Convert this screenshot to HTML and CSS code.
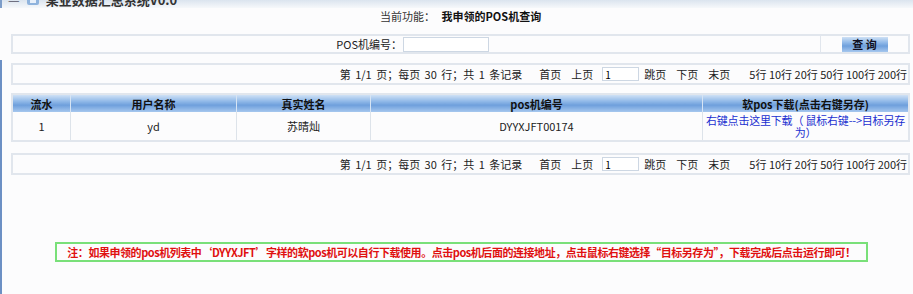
FILE: index.html
```html
<!DOCTYPE html>
<html lang="zh-CN">

<head>
    <meta charset="UTF-8">
    <title>我申领的POS机查询</title>
    <link rel="stylesheet" href="styles.css">
</head>

<body>
    <div class="topbar">
        <div class="topbar-text">
            <span class="topbar-dash">—</span>
            <svg class="topbar-icon" width="14" height="14" viewBox="0 0 14 14">
                <rect x="1" y="1" width="12" height="12" rx="2" fill="#8fb3dd" />
                <rect x="4" y="3" width="6" height="8" fill="#e8f0fa" />
            </svg>
            <span>某业数据汇总系统V0.0</span>
        </div>
    </div>

    <div class="func">当前功能： <b>我申领的POS机查询</b></div>

    <table class="search">
        <tr>
            <td class="search-label">POS机编号：</td>
            <td class="search-input"><input type="text"></td>
            <td class="search-btn"><button>查 询</button></td>
        </tr>
    </table>

    <div class="main">
        <div class="pager">
            <span class="pg-info">第 1/1 页；每页 30 行；共 1 条记录</span>
            <span class="pg-link first">首页</span>
            <span class="pg-link">上页</span>
            <input class="pg-input" type="text" value="1">
            <span class="pg-link jump">跳页</span>
            <span class="pg-link">下页</span>
            <span class="pg-link">末页</span>
            <span class="pg-rows">5行 10行 20行 50行 100行 200行</span>
        </div>

        <table class="list">
            <tr>
                <th class="c1">流水</th>
                <th class="c2">用户名称</th>
                <th class="c3">真实姓名</th>
                <th class="c4">pos机编号</th>
                <th class="c5">软pos下载(点击右键另存)</th>
            </tr>
            <tr>
                <td>1</td>
                <td>yd</td>
                <td>苏晴灿</td>
                <td>DYYXJFT00174</td>
                <td class="dl"><a href="#">右键点击这里下载（ 鼠标右键--&gt;目标另存为）</a></td>
            </tr>
        </table>

        <div class="pager">
            <span class="pg-info">第 1/1 页；每页 30 行；共 1 条记录</span>
            <span class="pg-link first">首页</span>
            <span class="pg-link">上页</span>
            <input class="pg-input" type="text" value="1">
            <span class="pg-link jump">跳页</span>
            <span class="pg-link">下页</span>
            <span class="pg-link">末页</span>
            <span class="pg-rows">5行 10行 20行 50行 100行 200行</span>
        </div>

        <div class="note">注：如果申领的pos机列表中‘DYYXJFT’字样的软pos机可以自行下载使用。点击pos机后面的连接地址，点击鼠标右键选择“目标另存为”，下载完成后点击运行即可！</div>
    </div>
</body>

</html>
```

FILE: styles.css
```css
body {
    margin: 0;
    font-family: "Noto Sans CJK SC", sans-serif;
    font-size: 11px;
    color: #222;
    background-color: #fcfcfd;
    height: 294px;
    overflow: hidden;
}

.topbar {
    height: 8px;
    overflow: hidden;
    background: linear-gradient(#dbe4ef, #f6f8fb);
    border-left: 2px solid #7d9dc9;
}

.topbar-text {
    display: flex;
    align-items: center;
    gap: 6px;
    margin-top: -9px;
    padding-left: 6px;
    height: 16px;
    font-size: 13px;
    font-weight: bold;
    color: #333;
}

.topbar-dash {
    color: #556;
    font-weight: normal;
}

.func {
    height: 17px;
    line-height: 17px;
    padding-left: 380px;
    color: #333;
}

.func b {
    margin-left: 4px;
    color: #111;
}

.search {
    margin: 9px 3px 0 11px;
    width: 899px;
    height: 20px;
    border-collapse: collapse;
    border: 2px solid #e1e6ed;
}

.search td {
    padding: 0;
}

.search-label {
    width: 389px;
    text-align: right;
}

.search-input input {
    width: 80px;
    height: 13px;
    margin: 0 0 0 1px;
    padding: 0 2px;
    border: 1px solid #cdd7e3;
    background: #fff;
    display: block;
}

.search-btn {
    width: 87px;
    text-align: center;
    border-left: 1px solid #e1e6ed;
}

.search-btn button,
.list th {
    background: linear-gradient(#cfe1f5 0%, #94bbe9 35%, #6e9fdc 60%, #a6c7ee 100%);
}

.search-btn button {
    width: 46px;
    height: 15px;
    padding: 0;
    border: none;
    font-family: inherit;
    font-size: 11px;
    font-weight: bold;
    line-height: 15px;
    color: #112;
}

.main {
    margin-top: 6px;
    padding: 3px 3px 0 9px;
    border-left: 2px solid #6c90c4;
    height: 231px;
}

.pager {
    height: 18px;
    display: flex;
    align-items: center;
    justify-content: flex-end;
    padding-right: 1px;
    border: 2px solid #e1e6ed;
    white-space: pre;
}

.pg-info {
    word-spacing: 2px;
}

.pg-link {
    margin-left: 10px;
}

.pg-link.first {
    margin-left: 17px;
}

.pg-link.jump {
    margin-left: 5px;
}

.pg-input {
    width: 31px;
    height: 12px;
    margin-left: 9px;
    padding: 0 2px;
    border: 1px solid #cdd7e3;
    font-family: inherit;
    font-size: 10px;
    line-height: 10px;
    vertical-align: top;
}

.pg-rows {
    margin-left: 19px;
}

.list {
    width: 899px;
    margin: 8px 0 11px;
    border-collapse: collapse;
    border: 2px solid #e1e6ed;
}

.list th {
    height: 17px;
    padding: 0;
    font-weight: bold;
    color: #111;
    border-left: 1px solid #d6e4f4;
}

.list td {
    height: 28px;
    padding: 0 4px;
    text-align: center;
    border-left: 1px solid #dde3ea;
}

.list td.dl {
    padding: 0 1px;
}

.c1 {
    width: 57px;
}

.c2 {
    width: 165px;
}

.c3 {
    width: 133px;
}

.c4 {
    width: 331px;
}

.list a {
    color: #1a2fd0;
    text-decoration: none;
    line-height: 12px;
    display: block;
    letter-spacing: -0.2px;
}

.note {
    width: 809px;
    margin: 67px 0 0 44px;
    height: 16px;
    line-height: 16px;
    border: 2px solid #79e079;
    color: #e01010;
    font-size: 11px;
    font-weight: bold;
    text-align: center;
    white-space: nowrap;
    letter-spacing: -0.45px;
}
```
